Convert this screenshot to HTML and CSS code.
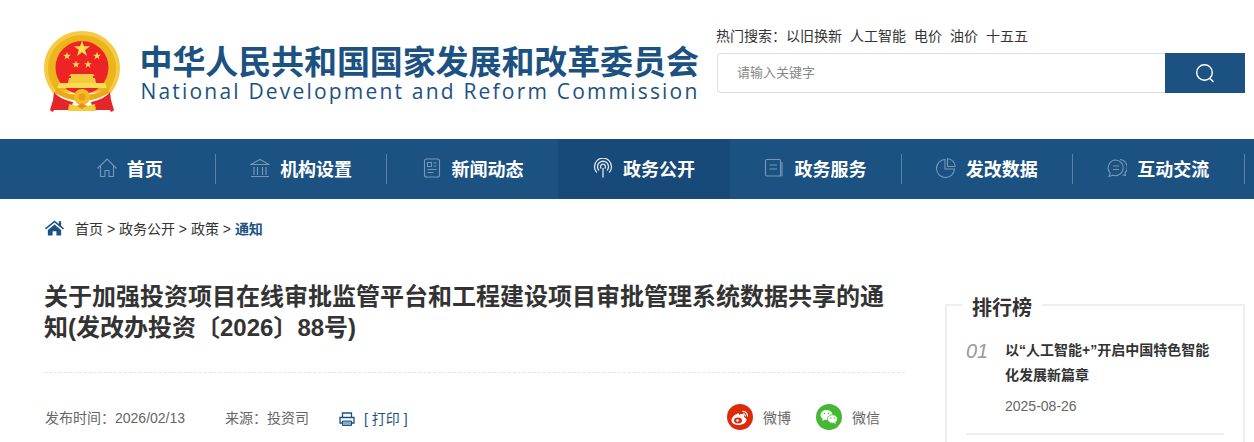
FILE: index.html
```html
<!DOCTYPE html>
<html lang="zh-CN">
<head>
<meta charset="utf-8">
<title>关于加强投资项目在线审批监管平台和工程建设项目审批管理系统数据共享的通知</title>
<link rel="stylesheet" href="styles.css">
</head>
<body>
<header class="header">
  <div class="brand">
    <svg class="emblem" viewBox="0 0 76 82" aria-hidden="true">
      <defs><polygon id="star" points="0,-1 .225,-.309 .951,-.309 .363,.118 .588,.809 0,.382 -.588,.809 -.363,.118 -.951,-.309 -.225,-.309"/></defs>
      <path d="M38 0C17 0 0 16 0 37c0 10 4 18 9 25l58 0c5-7 9-15 9-25C76 16 59 0 38 0z" fill="#f5cb45"/>
      <path d="M38 4C19 4 4 19 4 37c0 9 3 16 8 23h52c5-7 8-14 8-23C72 19 57 4 38 4z" fill="#edb41e"/>
      <circle cx="38" cy="36.500" r="26.500" fill="#ee2325"/>
      <use href="#star" transform="translate(38 18) scale(8.500)" fill="#fbe24c"/>
      <use href="#star" transform="translate(23 25) scale(4.200)" fill="#fbe24c"/>
      <use href="#star" transform="translate(53 25) scale(4.200)" fill="#fbe24c"/>
      <use href="#star" transform="translate(32 33.500) scale(4)" fill="#fbe24c"/>
      <use href="#star" transform="translate(44 33.500) scale(4)" fill="#fbe24c"/>
      <path d="M27 43h22l2 2h-2v2h2l1 5H24l1-5h2v-2h-2z" fill="#f7c93c"/>
      <path d="M15 52h46l2 5H13z" fill="#fbdc55"/>
      <path d="M12 57c8 5 17 7 26 7s18-2 26-7l1 5c-8 5-18 8-27 8s-19-3-27-8z" fill="#e9ab18"/>
      <circle cx="38" cy="66" r="8" fill="#f3bd25"/>
      <circle cx="38" cy="66" r="3.500" fill="#ee9a1c"/>
      <path d="M10 61c4 5 10 8 19 10l-2 8H10l-1 2-2-1-1-1 3-10z" fill="#e4262a"/>
      <path d="M66 61c-4 5-10 8-19 10l2 8h17l1 2 2-1 1-1-3-10z" fill="#e4262a"/>
      <path d="M25 73c4 1 8 2 13 2s9-1 13-2l1 7H24z" fill="#f6cb3a"/>
      <path d="M38 72l5 3-5 3-5-3z" fill="#e98f1b"/>
    </svg>
    <div class="brand-text">
      <div class="brand-cn">中华人民共和国国家发展和改革委员会</div>
      <div class="brand-en">National Development and Reform Commission</div>
    </div>
  </div>
  <div class="search-col">
    <div class="hot"><span>热门搜索：</span><a>以旧换新</a><a>人工智能</a><a>电价</a><a>油价</a><a>十五五</a></div>
    <div class="search">
      <div class="search-input">请输入关键字</div>
      <div class="search-btn">
        <svg viewBox="0 0 20 20" width="20" height="20" fill="none" stroke="#fff" stroke-width="1.400" aria-hidden="true"><circle cx="9.500" cy="9.500" r="7.800"/><path d="M15 15.500l3 3" stroke-linecap="round"/></svg>
      </div>
    </div>
  </div>
</header>

<nav class="nav">
  <div class="nav-inner">
    <a class="nav-item">
      <svg class="nav-icon" viewBox="0 0 20 20" aria-hidden="true"><path d="M.5 10.500L10 1l9.500 9.500M3.500 8v10.500h4.500v-6h4v6h4.500V8"/></svg>
      <span>首页</span>
    </a>
    <a class="nav-item">
      <svg class="nav-icon" viewBox="0 0 20 20" aria-hidden="true"><path d="M1 6.500L10 1.500l9 5zM2 6.500h16M4 9v8M7.500 9v8M12.500 9v8M16 9v8M1 18.500h18"/></svg>
      <span>机构设置</span>
    </a>
    <a class="nav-item">
      <svg class="nav-icon" viewBox="0 0 20 20" aria-hidden="true"><rect x="2.500" y="1" width="15" height="18" rx="2"/><path d="M5.500 4.500h4v4h-4zM11.500 5h3M11.500 8h3M5.500 11.500h9M5.500 14.500h6"/></svg>
      <span>新闻动态</span>
    </a>
    <a class="nav-item active">
      <svg class="nav-icon wifi" viewBox="0 0 20 20" aria-hidden="true"><path d="M10 10v9.500M8.300 10.500a2.500 2.500 0 1 1 3.400 0M6 12.500a5.500 5.500 0 1 1 8 0M3.800 14.500a8.500 8.500 0 1 1 12.400 0"/></svg>
      <span>政务公开</span>
    </a>
    <a class="nav-item">
      <svg class="nav-icon" viewBox="0 0 20 20" aria-hidden="true"><path d="M3 1.500h12a1.500 1.500 0 0 1 1.500 1.500v15H3a1.500 1.500 0 0 1-1.500-1.500V3A1.500 1.500 0 0 1 3 1.500zM18 4v14.500M5.500 7h7.500M5.500 11h7.500"/></svg>
      <span>政务服务</span>
    </a>
    <a class="nav-item">
      <svg class="nav-icon" viewBox="0 0 20 20" aria-hidden="true"><path d="M9 1.500a9 9 0 1 0 9.500 9.500H9z"/><path d="M11.500 .8a8 8 0 0 1 7.700 7.700h-7.700z"/></svg>
      <span>发改数据</span>
    </a>
    <a class="nav-item">
      <svg class="nav-icon" viewBox="0 0 20 20" aria-hidden="true"><path d="M9 2a7.800 7.800 0 0 0-5.800 13L2 18.500l4-1.300A7.800 7.800 0 1 0 9 2zM13 1.500a8 8 0 0 1 5 13.500l.5 2.500-3-.8M6 8h6M6 11.500h6"/></svg>
      <span>互动交流</span>
    </a>
  </div>
</nav>

<div class="crumbs">
  <svg class="crumb-home" viewBox="0 0 20 16" aria-hidden="true"><path d="M10 0L0 8.300l1 1.200 9-7.400 9 7.400 1-1.200-3-2.500V1h-2.500v2.700z"/><path d="M3 10l7-5.800 7 5.800v6h-5v-4.500H8V16H3z"/></svg>
  <span>首页 &gt; 政务公开 &gt; 政策 &gt; <b class="crumb-now">通知</b></span>
</div>

<main class="main">
  <article class="article">
    <h1 class="title">关于加强投资项目在线审批监管平台和工程建设项目审批管理系统数据共享的通知(发改办投资〔2026〕88号)</h1>
    <div class="meta">
      <span class="meta-date">发布时间：2026/02/13</span>
      <span class="meta-src">来源：投资司</span>
      <svg class="print-icon" viewBox="0 0 16 14" aria-hidden="true"><path d="M3.500 5V1h9v4M3 11H1V5.500h14V11h-2" fill="none" stroke="#1c5282" stroke-width="1.300"/><path d="M3.500 9h9v4.500h-9z" fill="#8aa8c4" stroke="#1c5282"/></svg>
      <a class="print">[ 打印 ]</a>
      <span class="share">
        <a class="share-item">
          <svg class="share-icon" viewBox="0 0 26 26" aria-hidden="true"><circle cx="13" cy="13" r="13" fill="#dc2a0b"/><path d="M11 9.500c-3.500 1-6.500 4-6.500 7 0 3 3.500 4.500 7 4.500 4.500 0 8-2.500 8-5 0-2-2-2.500-2.500-3 .5-1.500 0-3-2-3-1 0-2.500.5-3 1 .5-1.200 0-2-1-1.500z" fill="#fff"/><ellipse cx="11" cy="16.500" rx="4" ry="3" fill="#dc2a0b"/><circle cx="10.500" cy="16.500" r="1.300" fill="#fff"/><path d="M15.500 7.500a4.500 4.500 0 0 1 5 5M16 10a2 2 0 0 1 2.300 2.300" fill="none" stroke="#fff" stroke-width="1.200"/></svg>
          <span>微博</span>
        </a>
        <a class="share-item">
          <svg class="share-icon" viewBox="0 0 26 26" aria-hidden="true"><circle cx="13" cy="13" r="13" fill="#45b734"/><ellipse cx="10.500" cy="11" rx="6" ry="5" fill="#fff"/><path d="M7 14.500l-.8 2.500 3-1.500z" fill="#fff"/><ellipse cx="16.500" cy="15" rx="5" ry="4.200" fill="#fff" stroke="#45b734" stroke-width=".8"/><path d="M19 18l1 2-2.500-1.200z" fill="#fff"/><circle cx="8.500" cy="9.500" r=".8" fill="#45b734"/><circle cx="12.500" cy="9.500" r=".8" fill="#45b734"/><circle cx="14.800" cy="14" r=".7" fill="#45b734"/><circle cx="18.200" cy="14" r=".7" fill="#45b734"/></svg>
          <span>微信</span>
        </a>
      </span>
    </div>
  </article>

  <aside class="side">
    <h2 class="side-title">排行榜</h2>
    <div class="rank">
      <div class="rank-num">01</div>
      <div class="rank-body">
        <div class="rank-text">以“人工智能+”开启中国特色智能化发展新篇章</div>
        <div class="rank-date">2025-08-26</div>
      </div>
    </div>
  </aside>
</main>
</body>
</html>
```
FILE: styles.css
```css
* { box-sizing: border-box; }
html, body { margin: 0; height: 442px; overflow: hidden; }
body {
  background: #fff;
  color: #333;
  font-family: "Liberation Sans", "Noto Sans CJK SC", sans-serif;
  font-size: 14px;
}
a { color: inherit; text-decoration: none; }

.header {
  height: 139px;
  display: flex;
  justify-content: space-between;
  padding: 0 9px 0 44px;
}
.brand { display: flex; align-items: flex-start; }
.emblem { width: 76px; height: 82px; margin-top: 31px; flex: none; }
.brand-text { margin: 45px 0 0 19.500px; }
.brand-cn {
  color: #1c5282;
  font-size: 33px;
  font-weight: 700;
  line-height: 36px;
  letter-spacing: -.1px;
  white-space: nowrap;
}
.brand-en {
  color: #1c5282;
  font-family: "Open Sans", sans-serif;
  font-size: 21px;
  line-height: 20px;
  letter-spacing: 2.190px;
  white-space: nowrap;
  margin-left: 1px;
}
.search-col { width: 528px; padding-top: 26px; }
.hot { display: flex; gap: 8px; height: 20px; line-height: 20px; color: #333; margin-bottom: 7px; margin-left: -1px; white-space: nowrap; }
.hot span { margin-right: -8px; }
.search { display: flex; height: 40px; }
.search-input {
  flex: 1;
  border: 1px solid #ddd;
  border-right: 0;
  border-radius: 4px 0 0 4px;
  padding-left: 19px;
  line-height: 37px;
  font-size: 13px;
  color: #888;
}
.search-btn { width: 80px; background: #1c5282; display: flex; align-items: center; justify-content: center; }

.nav { height: 60px; background: #1c5282; padding-left: 44px; }
.nav-inner { width: 1200px; height: 60px; display: flex; }
.nav-item {
  flex: 1;
  display: flex;
  align-items: center;
  justify-content: center;
  gap: 10px;
  padding-bottom: 2px;
  color: #fff;
  font-size: 18px;
  font-weight: 700;
  position: relative;
}
.nav-item::after {
  content: "";
  position: absolute;
  right: -.6px;
  top: 15px;
  height: 30px;
  width: 1px;
  background: rgba(255, 255, 255, .28);
}
.nav-item.active { background: #174a78; }
.nav-item.active::after { display: none; }
.nav-icon { width: 20px; height: 20px; fill: none; stroke: #7698b8; stroke-width: 1.100; }
.nav-icon.wifi { stroke: #dde6ee; stroke-width: 1.300; }

.crumbs {
  height: 58px;
  padding-left: 45px;
  display: flex;
  align-items: center;
  gap: 11px;
  color: #333;
}
.crumb-home { width: 19px; height: 16px; fill: #1c5282; flex: none; }
.crumb-now { color: #1c5282; font-weight: 700; }

.main { display: flex; padding: 0 9px 0 44px; justify-content: space-between; }
.article { width: 861px; }
.title {
  margin: 24px 0 0;
  width: 861px;
  height: 92px;
  border-bottom: 1px dashed #e4e4e4;
  color: #333;
  font-size: 24px;
  font-weight: 700;
  line-height: 31px;
}
.meta {
  display: flex;
  align-items: center;
  height: 26px;
  margin-top: 31px;
  padding-left: 1px;
  color: #666;
}
.meta-date { margin-right: 40px; }
.meta-src { margin-right: 30px; }
.print-icon { width: 16px; height: 14px; margin-right: 9px; margin-top: 3px; flex: none; }
.print { color: #1c5282; margin-top: 1px; }
.share { margin-left: auto; display: flex; gap: 25px; padding-right: 25px; }
.share-item { display: flex; align-items: center; gap: 10px; }
.share-icon { width: 26px; height: 26px; display: block; }

.side {
  width: 300px;
  height: 138px;
  margin-top: 47px;
  border: 2px solid #eee;
  border-bottom: 0;
  padding: 0 19px;
  position: relative;
}
.side-title {
  position: absolute;
  left: 15px;
  top: -12px;
  margin: 0;
  padding: 0 10px;
  background: #fff;
  color: #333;
  font-size: 20px;
  font-weight: 700;
  line-height: 28px;
}
.rank {
  display: flex;
  gap: 19px;
  padding: 32px 0 15px;
  border-bottom: 2px solid #eee;
}
.rank-num {
  width: 20px;
  flex: none;
  color: #999;
  font-size: 20px;
  font-style: italic;
  line-height: 26px;
}
.rank-text {
  color: #333;
  font-size: 14px;
  font-weight: 700;
  line-height: 25px;
  padding-right: 8px;
}
.rank-date { color: #666; margin-top: 6px; line-height: 24px; }
```
